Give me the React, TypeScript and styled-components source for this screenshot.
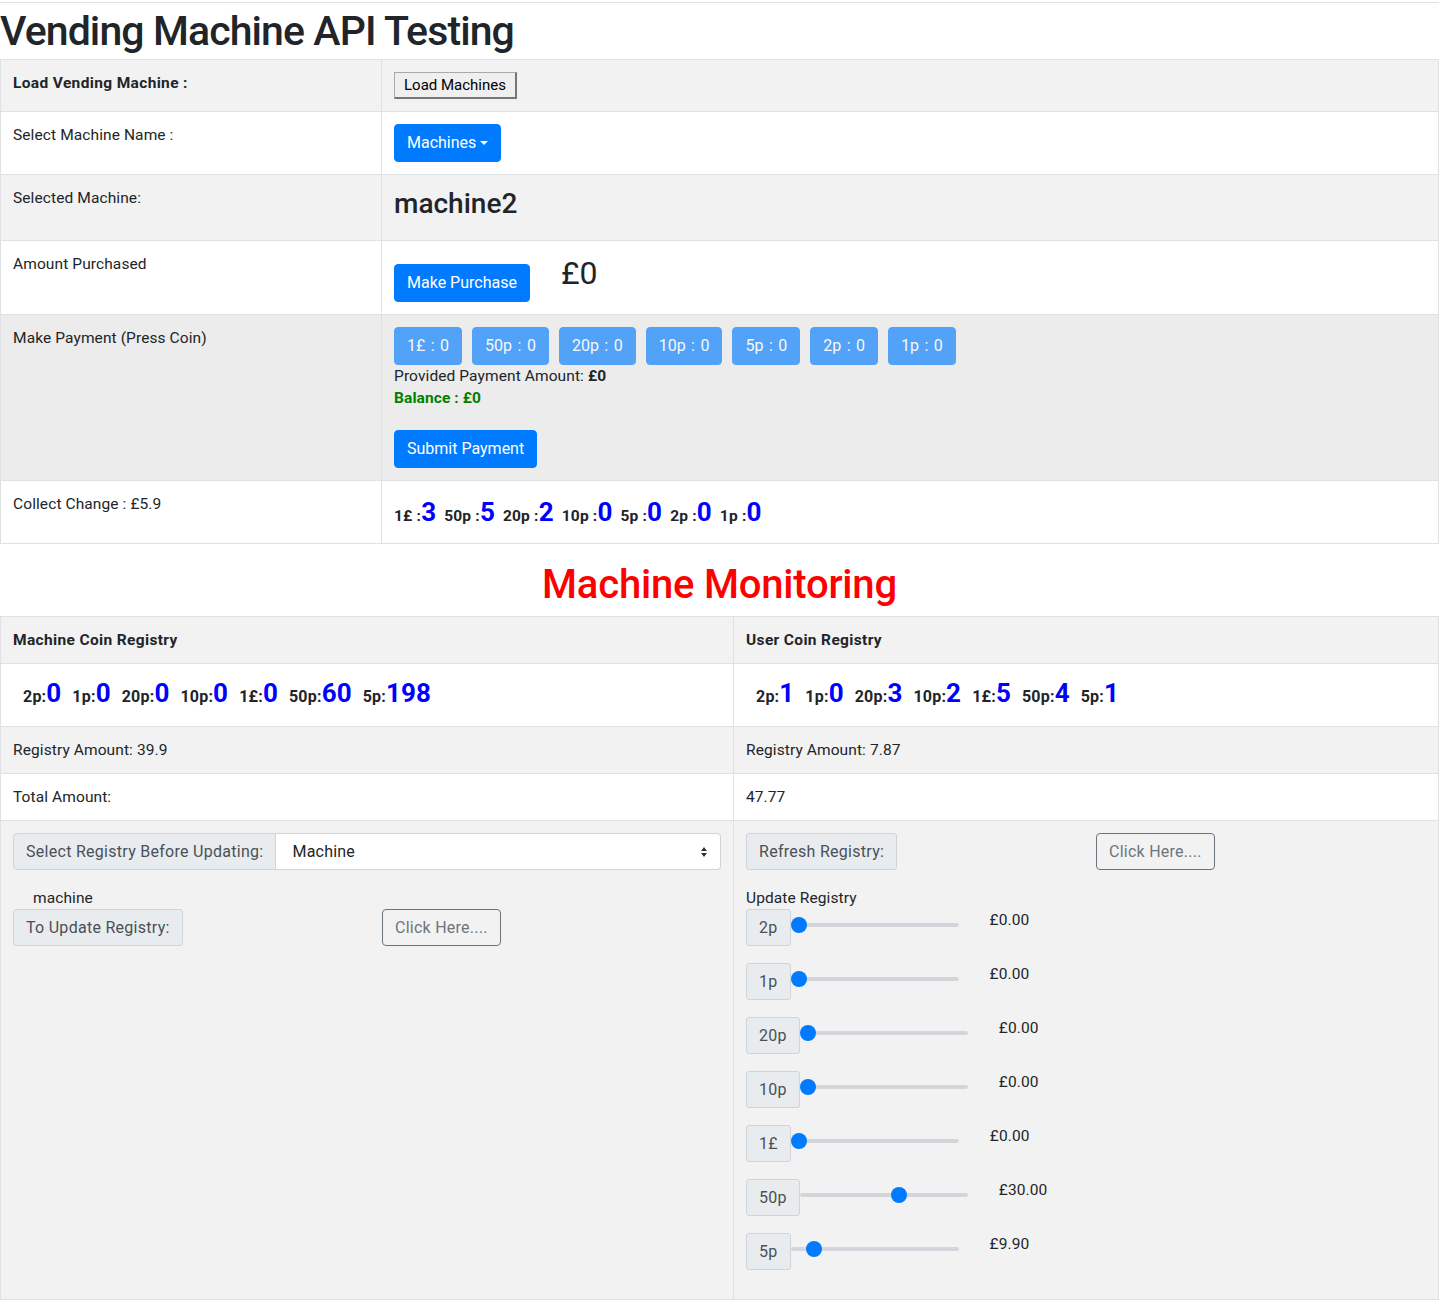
import React from "react";
import styled, { createGlobalStyle } from "styled-components";

const GlobalStyle = createGlobalStyle`
    body {
        margin: 0;
        font-family: Roboto, "Liberation Sans", Arial, sans-serif;
        color: #212529;
        background: #fff;
    }
`;

const blue = "#007bff";
const border = "#dee2e6";

const Page = styled.div`
    margin-top: 2px;
    border-top: 1px solid ${border};
`;

const Title = styled.h1`
    margin: 0 0 4px;
    padding-top: 4px;
    font-size: 41px;
    font-weight: 500;
    line-height: 48px;
    letter-spacing: -0.9px;
`;

const SectionTitle = styled.h2`
    margin: 17px 0 7px;
    font-size: 40px;
    font-weight: 500;
    line-height: 48px;
    letter-spacing: -0.2px;
    text-align: center;
    color: #ff0000;
`;

const Table = styled.table`
    width: 100%;
    border-collapse: collapse;
    font-size: 15.5px;
    line-height: 22px;
    table-layout: fixed;
`;

const Row = styled.tr<{ $bg?: string }>`
    background: ${(p) => p.$bg || "#fff"};
`;

const Cell = styled.td<{ $bold?: boolean }>`
    padding: 12px;
    border: 1px solid ${border};
    vertical-align: top;
    font-weight: ${(p) => (p.$bold ? 700 : 400)};
    letter-spacing: ${(p) => (p.$bold ? "0.35px" : "0.1px")};
`;

const NativeButton = styled.button`
    font-family: inherit;
    font-size: 15px;
    line-height: 18px;
    padding: 3px 9px;
    background: #efefef;
    color: #000;
    border: 1px solid #a9a9a9;
    border-right: 2px solid #767676;
    border-bottom: 2px solid #767676;
    border-radius: 1px;
`;

const Btn = styled.button<{ $faded?: boolean }>`
    font-family: inherit;
    font-size: 16px;
    line-height: 24px;
    padding: 6px 12px;
    background: ${blue};
    color: #fff;
    border: 1px solid ${blue};
    border-radius: 4px;
    opacity: ${(p) => (p.$faded ? 0.65 : 1)};
    word-spacing: ${(p) => (p.$faded ? "1.5px" : "0")};
    white-space: nowrap;
`;

const Caret = styled.span`
    display: inline-block;
    margin-left: 4px;
    vertical-align: 3px;
    border-top: 4px solid #fff;
    border-left: 4px solid transparent;
    border-right: 4px solid transparent;
`;

const MachineName = styled.div`
    font-size: 28px;
    font-weight: 500;
    line-height: 33px;
    letter-spacing: 0;
    margin: 0 0 8px;
`;

const PurchaseLine = styled.div`
    display: flex;
    align-items: flex-start;
    gap: 31px;
    padding-top: 11px;
`;

const Price = styled.div`
    font-size: 32px;
    line-height: 36px;
    margin-top: -9px;
`;

const CoinButtons = styled.div`
    display: flex;
    gap: 10px;
`;

const Line = styled.div<{ $green?: boolean }>`
    line-height: 22px;
    color: ${(p) => (p.$green ? "#008000" : "#212529")};
    font-weight: ${(p) => (p.$green ? 700 : 400)};
`;

const SubmitWrap = styled.div`
    margin-top: 21px;
`;

const ChangeList = styled.div`
    display: flex;
    align-items: center;
    gap: 8px;
    height: 34px;
    padding-top: 4px;
`;

const CoinItem = styled.span`
    line-height: 30px;
    white-space: nowrap;
`;

const CoinLabel = styled.span<{ $size: number }>`
    font-size: ${(p) => p.$size}px;
    font-weight: 700;
    letter-spacing: 0.2px;
`;

const CoinCount = styled.span`
    font-size: 26px;
    font-weight: 700;
    color: #0000ff;
`;

const RegistryList = styled.div`
    display: flex;
    align-items: center;
    gap: 11px;
    padding-left: 10px;
    height: 38px;
`;

const GroupRow = styled.div`
    display: flex;
    align-items: stretch;
`;

const GroupText = styled.span<{ $left?: boolean }>`
    display: inline-flex;
    align-items: center;
    font-size: 16px;
    line-height: 23px;
    letter-spacing: 0.28px;
    padding: 6px 12px;
    color: #495057;
    background: #e9ecef;
    border: 1px solid #ced4da;
    border-radius: ${(p) => (p.$left ? "4px 0 0 4px" : "3px")};
    white-space: nowrap;
`;

const SelectBox = styled.div`
    flex: 1;
    display: flex;
    align-items: center;
    justify-content: space-between;
    padding: 6px 12px 6px 16px;
    font-size: 16px;
    line-height: 23px;
    letter-spacing: 0.2px;
    background: #fff;
    border: 1px solid #ced4da;
    border-left: none;
    border-radius: 0 4px 4px 0;
`;

const Arrows = styled.span`
    display: flex;
    flex-direction: column;
    gap: 2px;
    margin-right: 1px;
    &::before,
    &::after {
        content: "";
        border-left: 3.5px solid transparent;
        border-right: 3.5px solid transparent;
    }
    &::before {
        border-bottom: 4px solid #333;
    }
    &::after {
        border-top: 4px solid #333;
    }
`;

const SplitRow = styled.div<{ $first: number }>`
    display: grid;
    grid-template-columns: ${(p) => p.$first}px auto;
    justify-content: start;
    align-items: start;
`;

const OutlineBtn = styled.button`
    font-family: inherit;
    font-size: 16px;
    line-height: 23px;
    letter-spacing: 0.25px;
    padding: 6px 12px;
    color: #6c757d;
    background: transparent;
    border: 1px solid #6c757d;
    border-radius: 4px;
`;

const SmallLabel = styled.div<{ $indent?: number }>`
    margin-top: 17px;
    padding-left: ${(p) => p.$indent || 0}px;
    line-height: 22px;
`;

const SliderRow = styled.div`
    display: flex;
    align-items: flex-start;
    margin-bottom: 17px;
`;

const Range = styled.input`
    -webkit-appearance: none;
    appearance: none;
    width: 168px;
    height: 32px;
    margin: 0;
    background: transparent;
    &::-webkit-slider-runnable-track {
        height: 4px;
        border-radius: 2px;
        background: #d2d6db;
    }
    &::-webkit-slider-thumb {
        -webkit-appearance: none;
        width: 16px;
        height: 16px;
        margin-top: -6px;
        border-radius: 50%;
        background: ${blue};
        border: none;
    }
`;

const Amount = styled.span`
    margin-left: 31px;
    line-height: 22px;
`;

type Coin = [string, number];

const changeCoins: Coin[] = [["1£", 3], ["50p", 5], ["20p", 2], ["10p", 0], ["5p", 0], ["2p", 0], ["1p", 0]];
const machineCoins: Coin[] = [["2p", 0], ["1p", 0], ["20p", 0], ["10p", 0], ["1£", 0], ["50p", 60], ["5p", 198]];
const userCoins: Coin[] = [["2p", 1], ["1p", 0], ["20p", 3], ["10p", 2], ["1£", 5], ["50p", 4], ["5p", 1]];
const paymentCoins = ["1£", "50p", "20p", "10p", "5p", "2p", "1p"];

const sliders: { label: string; value: number; max: number; amount: string }[] = [
    { label: "2p", value: 0, max: 100, amount: "£0.00" },
    { label: "1p", value: 0, max: 100, amount: "£0.00" },
    { label: "20p", value: 0, max: 100, amount: "£0.00" },
    { label: "10p", value: 0, max: 100, amount: "£0.00" },
    { label: "1£", value: 0, max: 100, amount: "£0.00" },
    { label: "50p", value: 60, max: 100, amount: "£30.00" },
    { label: "5p", value: 198, max: 1900, amount: "£9.90" },
];

function RegistryCoins({ coins }: { coins: Coin[] }) {
    return (
        <RegistryList>
            {coins.map(([label, count]) => (
                <CoinItem key={label}>
                    <CoinLabel $size={16}>{label}:</CoinLabel>
                    <CoinCount>{count}</CoinCount>
                </CoinItem>
            ))}
        </RegistryList>
    );
}

export default function App() {
    return (
        <Page>
            <GlobalStyle />
            <Title>Vending Machine API Testing</Title>

            <Table>
                <colgroup>
                    <col style={{ width: 381 }} />
                    <col />
                </colgroup>
                <tbody>
                    <Row $bg="#f2f2f2">
                        <Cell $bold>Load Vending Machine :</Cell>
                        <Cell>
                            <NativeButton>Load Machines</NativeButton>
                        </Cell>
                    </Row>
                    <Row>
                        <Cell>Select Machine Name :</Cell>
                        <Cell>
                            <Btn>
                                Machines
                                <Caret />
                            </Btn>
                        </Cell>
                    </Row>
                    <Row $bg="#f2f2f2">
                        <Cell>Selected Machine:</Cell>
                        <Cell>
                            <MachineName>machine2</MachineName>
                        </Cell>
                    </Row>
                    <Row>
                        <Cell>Amount Purchased</Cell>
                        <Cell>
                            <PurchaseLine>
                                <Btn>Make Purchase</Btn>
                                <Price>£0</Price>
                            </PurchaseLine>
                        </Cell>
                    </Row>
                    <Row $bg="#ececec">
                        <Cell>Make Payment (Press Coin)</Cell>
                        <Cell>
                            <CoinButtons>
                                {paymentCoins.map((c) => (
                                    <Btn key={c} $faded>
                                        {c} : 0
                                    </Btn>
                                ))}
                            </CoinButtons>
                            <Line>
                                Provided Payment Amount: <b>£0</b>
                            </Line>
                            <Line $green>Balance : £0</Line>
                            <SubmitWrap>
                                <Btn>Submit Payment</Btn>
                            </SubmitWrap>
                        </Cell>
                    </Row>
                    <Row>
                        <Cell>Collect Change : £5.9</Cell>
                        <Cell>
                            <ChangeList>
                                {changeCoins.map(([label, count]) => (
                                    <CoinItem key={label}>
                                        <CoinLabel $size={15.5}>{label} :</CoinLabel>
                                        <CoinCount>{count}</CoinCount>
                                    </CoinItem>
                                ))}
                            </ChangeList>
                        </Cell>
                    </Row>
                </tbody>
            </Table>

            <SectionTitle>Machine Monitoring</SectionTitle>

            <Table>
                <colgroup>
                    <col style={{ width: 733 }} />
                    <col />
                </colgroup>
                <tbody>
                    <Row $bg="#f2f2f2">
                        <Cell $bold>Machine Coin Registry</Cell>
                        <Cell $bold>User Coin Registry</Cell>
                    </Row>
                    <Row>
                        <Cell>
                            <RegistryCoins coins={machineCoins} />
                        </Cell>
                        <Cell>
                            <RegistryCoins coins={userCoins} />
                        </Cell>
                    </Row>
                    <Row $bg="#f2f2f2">
                        <Cell>Registry Amount: 39.9</Cell>
                        <Cell>Registry Amount: 7.87</Cell>
                    </Row>
                    <Row>
                        <Cell>Total Amount:</Cell>
                        <Cell>47.77</Cell>
                    </Row>
                    <Row $bg="#f2f2f2">
                        <Cell>
                            <GroupRow>
                                <GroupText $left>Select Registry Before Updating:</GroupText>
                                <SelectBox>
                                    Machine
                                    <Arrows />
                                </SelectBox>
                            </GroupRow>
                            <SmallLabel $indent={20}>machine</SmallLabel>
                            <SplitRow $first={369}>
                                <GroupRow>
                                    <GroupText>To Update Registry:</GroupText>
                                </GroupRow>
                                <OutlineBtn>Click Here....</OutlineBtn>
                            </SplitRow>
                        </Cell>
                        <Cell>
                            <SplitRow $first={350}>
                                <GroupRow>
                                    <GroupText>Refresh Registry:</GroupText>
                                </GroupRow>
                                <OutlineBtn>Click Here....</OutlineBtn>
                            </SplitRow>
                            <SmallLabel>Update Registry</SmallLabel>
                            {sliders.map((s) => (
                                <SliderRow key={s.label}>
                                    <GroupText>{s.label}</GroupText>
                                    <Range type="range" min={0} max={s.max} defaultValue={s.value} readOnly />
                                    <Amount>{s.amount}</Amount>
                                </SliderRow>
                            ))}
                        </Cell>
                    </Row>
                </tbody>
            </Table>
        </Page>
    );
}
